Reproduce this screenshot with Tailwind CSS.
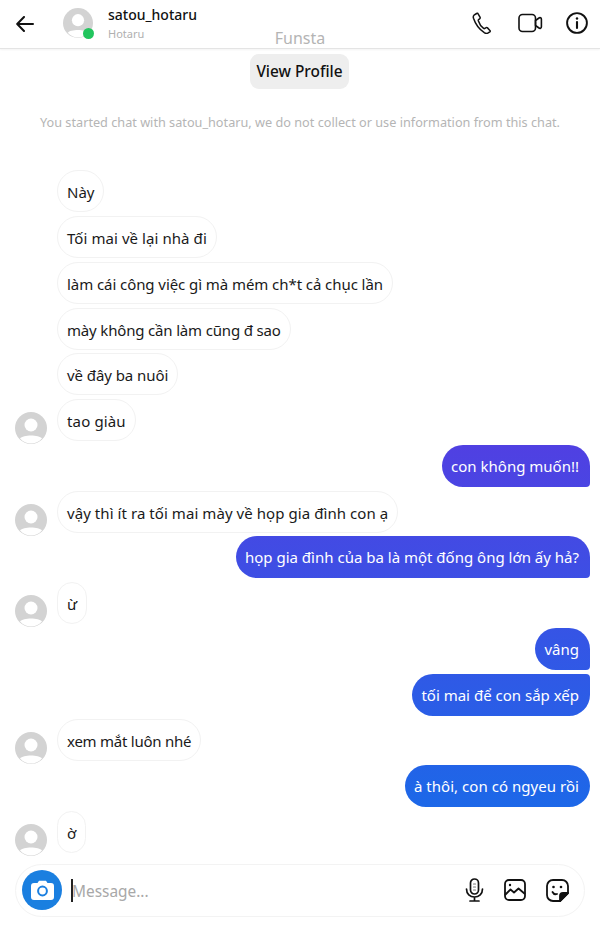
<!DOCTYPE html>
<html lang="vi">
  <head>
    <meta charset="UTF-8" />
    <meta name="viewport" content="width=device-width, initial-scale=1.0" />
    <title>satou_hotaru</title>
    <script src="https://cdn.jsdelivr.net/npm/@tailwindcss/browser@4"></script>
  </head>

  <body>
    <div class="relative w-[600px] h-[932px] overflow-hidden bg-white font-['Noto_Sans',sans-serif] flex flex-col">
      <!-- header -->
      <header class="h-[49px] shrink-0 flex items-center border-b border-[#e4e4e4] shadow-[0_1px_2px_rgba(0,0,0,0.05)] pl-[16px] pr-[12px]">
        <svg class="w-[18px] h-[16px]" viewBox="0 0 18 16" fill="none" stroke="#111" stroke-width="2" stroke-linecap="round" stroke-linejoin="round">
          <path d="M8 1 1.2 8 8 15M1.5 8H17" />
        </svg>
        <div class="relative w-[30px] h-[30px] ml-[29px] mt-[-2px]">
          <svg class="w-[30px] h-[30px]" viewBox="0 0 32 32"><circle cx="16" cy="16" r="16" fill="#d3d3d3" /><circle cx="16" cy="13" r="6.5" fill="#fff" /><path d="M5 26.5C8 22.5 24 22.5 27 26.5 24 30 20 31.5 16 31.5S8 30 5 26.5Z" fill="#fff" /></svg>
          <span class="absolute right-[-1px] bottom-[-1px] w-[11px] h-[11px] rounded-full bg-[#22c55e]"></span>
        </div>
        <div class="ml-[15px] mt-[-2px]">
          <p class="text-[14px] leading-[18px] text-[#111] font-medium">satou_hotaru</p>
          <p class="text-[11px] leading-[14px] mt-[3px] text-[#b0b0b0]">Hotaru</p>
        </div>
        <div class="ml-auto flex items-center mt-[-3px]">
          <svg class="w-[20px] h-[22px] mr-[26px]" viewBox="0 0 20 22" fill="none" stroke="#111" stroke-width="1.5" stroke-linejoin="round" stroke-linecap="round">
            <path d="M2 3.2 4.6 1.5c.6-.4 1.2-.2 1.5.4L8 5.2c.3.5.2 1-.2 1.4L6.5 7.8c-.3.3-.3.6-.2 1 .8 2.6 3.1 6 5.3 7.6.3.2.7.3 1 .1l1.5-.8c.5-.3 1-.2 1.4.2l2.4 2.5c.4.5.4 1-.1 1.4l-1.6 1.1c-1.1.7-2.6.6-3.9-.2C7.6 17.6 3.4 12 1.5 6.3 1.1 5 1.2 3.9 2 3.2Z" />
          </svg>
          <svg class="w-[25px] h-[20px] mr-[23px]" viewBox="0 0 25 20" fill="none" stroke="#111" stroke-width="1.6" stroke-linejoin="round">
            <rect x="1" y="1.5" width="16.5" height="17" rx="3.5" />
            <path d="M17.5 7.5 21 5c1-.7 2.4-.2 2.4 1.2v7.6c0 1.4-1.4 1.9-2.4 1.2l-3.5-2.5Z" />
          </svg>
          <svg class="w-[22px] h-[22px]" viewBox="0 0 22 22" fill="none" stroke="#111" stroke-width="1.9" stroke-linecap="round">
            <circle cx="11" cy="11" r="9.9" />
            <path d="M11 10v6" stroke-width="2.1" />
            <circle cx="11" cy="6.5" r="1.2" fill="#111" stroke="none" />
          </svg>
        </div>
      </header>

      <p class="absolute top-[28px] left-0 w-full text-center text-[16px] leading-[20px] text-[#b4b4b4]">Funsta</p>

      <!-- chat intro -->
      <div class="flex justify-center mt-[5px]">
        <button type="button" class="w-[99px] h-[35px] mr-[1px] pt-[1px] rounded-[9px] bg-[#eeeeee] text-[15.4px] font-medium text-[#111]">View Profile</button>
      </div>
      <p class="mt-[24px] text-center text-[12.7px] leading-[18px] text-[#b5b5b5]">You started chat with satou_hotaru, we do not collect or use information from this chat.</p>

      <!-- messages -->
      <div class="mt-[39.25px] flex flex-col gap-[3.75px] pl-[15px] pr-[10px]">
        <div class="flex pl-[42px]"><p class="h-[42px] px-[9px] leading-[42px] text-[15px] text-[#1a1a1a] border border-[#f2f2f2] rounded-[21px] bg-white">Này</p></div>
        <div class="flex pl-[42px]"><p class="h-[42px] px-[9px] leading-[42px] text-[15px] tracking-[0.07px] text-[#1a1a1a] border border-[#f2f2f2] rounded-[21px] bg-white">Tối mai về lại nhà đi</p></div>
        <div class="flex pl-[42px]"><p class="h-[42px] px-[9px] leading-[42px] text-[15px] tracking-[-0.07px] text-[#1a1a1a] border border-[#f2f2f2] rounded-[21px] bg-white">làm cái công việc gì mà mém ch*t cả chục lần</p></div>
        <div class="flex pl-[42px]"><p class="h-[42px] px-[9px] leading-[42px] text-[15px] tracking-[-0.17px] text-[#1a1a1a] border border-[#f2f2f2] rounded-[21px] bg-white">mày không cần làm cũng đ sao</p></div>
        <div class="flex pl-[42px]"><p class="h-[42px] px-[9px] leading-[42px] text-[15px] tracking-[-0.07px] text-[#1a1a1a] border border-[#f2f2f2] rounded-[21px] bg-white">về đây ba nuôi</p></div>
        <div class="flex items-end">
          <svg class="w-[32px] h-[32px] mr-[10px] mb-[-3px]" viewBox="0 0 32 32"><circle cx="16" cy="16" r="16" fill="#d3d3d3" /><circle cx="16" cy="13" r="6.5" fill="#fff" /><path d="M5 26.5C8 22.5 24 22.5 27 26.5 24 30 20 31.5 16 31.5S8 30 5 26.5Z" fill="#fff" /></svg>
          <p class="h-[42px] px-[9px] leading-[42px] text-[15px] tracking-[0.15px] text-[#1a1a1a] border border-[#f2f2f2] rounded-[21px] bg-white">tao giàu</p>
        </div>
        <div class="flex justify-end"><p class="h-[42px] pl-[9px] pr-[11px] leading-[42px] text-[15px] text-white rounded-[21px] rounded-br-[4px] bg-fixed bg-[linear-gradient(#5040e2_445px,#1c68e8_810px)]">con không muốn!!</p></div>
        <div class="flex items-end">
          <svg class="w-[32px] h-[32px] mr-[10px] mb-[-3px]" viewBox="0 0 32 32"><circle cx="16" cy="16" r="16" fill="#d3d3d3" /><circle cx="16" cy="13" r="6.5" fill="#fff" /><path d="M5 26.5C8 22.5 24 22.5 27 26.5 24 30 20 31.5 16 31.5S8 30 5 26.5Z" fill="#fff" /></svg>
          <p class="h-[42px] px-[9px] leading-[42px] text-[15px] tracking-[0.065px] text-[#1a1a1a] border border-[#f2f2f2] rounded-[21px] bg-white">vậy thì ít ra tối mai mày về họp gia đình con ạ</p>
        </div>
        <div class="flex justify-end"><p class="h-[42px] pl-[9px] pr-[11px] leading-[42px] text-[15px] text-white rounded-[21px] rounded-br-[4px] bg-fixed bg-[linear-gradient(#5040e2_445px,#1c68e8_810px)]">họp gia đình của ba là một đống ông lớn ấy hả?</p></div>
        <div class="flex items-end">
          <svg class="w-[32px] h-[32px] mr-[10px] mb-[-3px]" viewBox="0 0 32 32"><circle cx="16" cy="16" r="16" fill="#d3d3d3" /><circle cx="16" cy="13" r="6.5" fill="#fff" /><path d="M5 26.5C8 22.5 24 22.5 27 26.5 24 30 20 31.5 16 31.5S8 30 5 26.5Z" fill="#fff" /></svg>
          <p class="h-[42px] px-[9px] leading-[42px] text-[15px] text-[#1a1a1a] border border-[#f2f2f2] rounded-[21px] bg-white">ừ</p>
        </div>
        <div class="flex justify-end"><p class="h-[42px] pl-[9px] pr-[11px] leading-[42px] text-[15px] text-white rounded-[21px] rounded-br-[4px] bg-fixed bg-[linear-gradient(#5040e2_445px,#1c68e8_810px)]">vâng</p></div>
        <div class="flex justify-end"><p class="h-[42px] pl-[9px] pr-[11px] leading-[42px] text-[15px] text-white rounded-[21px] rounded-tr-[4px] bg-fixed bg-[linear-gradient(#5040e2_445px,#1c68e8_810px)]">tối mai để con sắp xếp</p></div>
        <div class="flex items-end">
          <svg class="w-[32px] h-[32px] mr-[10px] mb-[-3px]" viewBox="0 0 32 32"><circle cx="16" cy="16" r="16" fill="#d3d3d3" /><circle cx="16" cy="13" r="6.5" fill="#fff" /><path d="M5 26.5C8 22.5 24 22.5 27 26.5 24 30 20 31.5 16 31.5S8 30 5 26.5Z" fill="#fff" /></svg>
          <p class="h-[42px] px-[9px] leading-[42px] text-[15px] tracking-[-0.25px] text-[#1a1a1a] border border-[#f2f2f2] rounded-[21px] bg-white">xem mắt luôn nhé</p>
        </div>
        <div class="flex justify-end"><p class="h-[42px] pl-[9px] pr-[11px] leading-[42px] text-[15px] tracking-[0.04px] text-white rounded-[21px] bg-fixed bg-[linear-gradient(#5040e2_445px,#1c68e8_810px)]">à thôi, con có ngyeu rồi</p></div>
        <div class="flex items-end">
          <svg class="w-[32px] h-[32px] mr-[10px] mb-[-3px]" viewBox="0 0 32 32"><circle cx="16" cy="16" r="16" fill="#d3d3d3" /><circle cx="16" cy="13" r="6.5" fill="#fff" /><path d="M5 26.5C8 22.5 24 22.5 27 26.5 24 30 20 31.5 16 31.5S8 30 5 26.5Z" fill="#fff" /></svg>
          <p class="h-[42px] px-[9px] leading-[42px] text-[15px] text-[#1a1a1a] border border-[#f2f2f2] rounded-[21px] bg-white">ờ</p>
        </div>
      </div>

      <!-- composer -->
      <div class="mt-[10.75px] mx-[15px] h-[53px] rounded-[26.5px] border border-[#f3f3f3] flex items-center pl-[6px] pr-[15px]">
        <span class="w-[40px] h-[40px] rounded-full bg-[#1a7fe0] flex items-center justify-center">
          <svg class="w-[23px] h-[20px]" viewBox="0 0 23 20"><path d="M3 3h3.5L8 .8h7L16.5 3H20a3 3 0 0 1 3 3v11a3 3 0 0 1-3 3H3a3 3 0 0 1-3-3V6a3 3 0 0 1 3-3Z" fill="#fff" /><circle cx="11.5" cy="11" r="4.4" fill="none" stroke="#1a7fe0" stroke-width="2" /></svg>
        </span>
        <span class="w-[2px] h-[23px] bg-[#222] ml-[9px]"></span>
        <span class="text-[15.4px] ml-[-1px] mt-[3px] text-[#a8a8a8]">Message...</span>
        <div class="ml-auto flex items-center gap-[20px]">
          <svg class="w-[19px] h-[24px]" viewBox="0 0 19 24" fill="none" stroke="#111" stroke-width="1.7" stroke-linecap="round">
            <rect x="5.5" y="1" width="8" height="15" rx="4" />
            <path d="M1.5 11c0 5 3.5 8 8 8s8-3 8-8M9.5 19v3.5M5 23h9" />
            <path d="M8.5 6h2M8.5 9h2M8.5 12h2" stroke-width="1.2" stroke="#777" />
          </svg>
          <svg class="w-[22px] h-[22px]" viewBox="0 0 22 22" fill="none" stroke="#111" stroke-width="1.8" stroke-linejoin="round">
            <rect x="1" y="1" width="20" height="20" rx="4" />
            <path d="M1 16 6.5 10.5 10 13.5 14.5 9.5 21 15" />
            <circle cx="6" cy="6" r="1.2" fill="#111" stroke="none" />
          </svg>
          <svg class="w-[23px] h-[23px]" viewBox="0 0 23 23" fill="none" stroke="#111" stroke-width="1.8" stroke-linejoin="round" stroke-linecap="round">
            <path d="M14 22H7a6 6 0 0 1-6-6V7a6 6 0 0 1 6-6h9a6 6 0 0 1 6 6v7Z" />
            <path d="M22 14h-5a3 3 0 0 0-3 3v5Z" fill="#111" />
            <path d="M6.5 13c1 2 3 2.5 4.5 2" />
            <circle cx="7.5" cy="8" r="1.3" fill="#111" stroke="none" />
            <circle cx="15" cy="8" r="1.3" fill="#111" stroke="none" />
          </svg>
        </div>
      </div>
    </div>
  </body>
</html>
